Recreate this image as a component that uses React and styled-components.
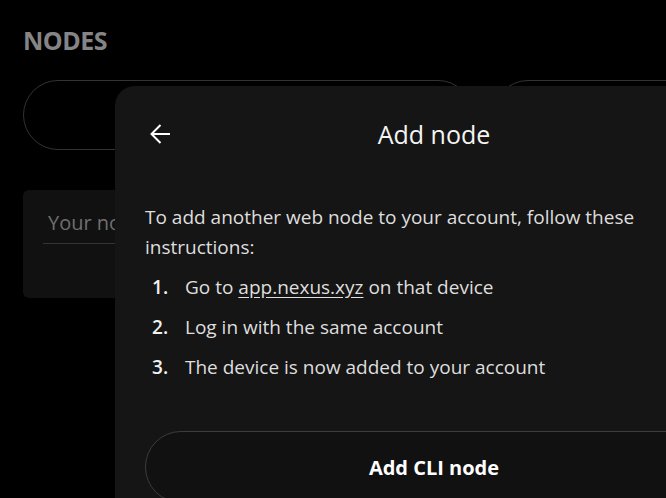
import React from 'react';
import styled, { createGlobalStyle } from 'styled-components';

const GlobalStyle = createGlobalStyle`
  html, body {
    margin: 0;
    padding: 0;
    background: #000;
    overflow: hidden;
  }
  body {
    font-family: 'Open Sans', 'Noto Sans', sans-serif;
    color: #e6e6e6;
  }
`;

const Page = styled.div`
  position: relative;
  width: 666px;
  height: 498px;
  overflow: hidden;
  padding: 26px 23px;
  box-sizing: border-box;
`;

const Heading = styled.h1`
  margin: 0;
  font-size: 25px;
  font-weight: 700;
  letter-spacing: -0.5px;
  color: #858585;
  line-height: 28px;
`;

const ActionRow = styled.div`
  display: flex;
  gap: 20px;
  margin-top: 26px;
`;

const Pill = styled.button`
  flex-shrink: 0;
  width: 450px;
  height: 70px;
  border-radius: 35px;
  border: 1px solid #333;
  background: transparent;
`;

const Card = styled.div`
  margin-top: 40px;
  width: 450px;
  height: 108px;
  box-sizing: border-box;
  padding: 17px 20px;
  background: #111;
  border-radius: 6px;
`;

const NameInput = styled.input`
  width: 100%;
  box-sizing: border-box;
  background: transparent;
  border: none;
  border-bottom: 1px solid #333;
  padding: 2px 5px 7px;
  font-family: inherit;
  font-size: 20px;
  color: #ddd;
  outline: none;

  &::placeholder {
    color: #6f6f6f;
  }
`;

const Modal = styled.div`
  position: absolute;
  left: 115px;
  top: 86px;
  width: 638px;
  height: 460px;
  box-sizing: border-box;
  padding: 28px 30px;
  background: #151515;
  border-radius: 20px;
`;

const Header = styled.div`
  display: grid;
  grid-template-columns: 40px 1fr 40px;
  align-items: center;
  height: 40px;
`;

const BackButton = styled.button`
  display: flex;
  align-items: center;
  background: none;
  border: none;
  padding: 0 0 0 5px;
  color: #fff;
  cursor: pointer;
`;

const Title = styled.h2`
  margin: 0;
  text-align: center;
  font-size: 25px;
  font-weight: 400;
  color: #f4f4f4;
`;

const Intro = styled.p`
  margin: 48px 0 0;
  font-size: 19px;
  line-height: 30px;
  color: #dedede;
`;

const Steps = styled.ol`
  margin: 10px 0 0;
  padding: 0;
  list-style: none;
  display: flex;
  flex-direction: column;
  gap: 10px;
`;

const Step = styled.li`
  display: flex;
  font-size: 19px;
  line-height: 30px;
  color: #dedede;
`;

const StepNum = styled.span`
  width: 40px;
  padding-left: 7px;
  box-sizing: border-box;
  font-weight: 600;
  color: #f0f0f0;
`;

const Link = styled.a`
  color: #dedede;
  text-decoration: underline;
  text-underline-offset: 3px;
`;

const OutlineButton = styled.button`
  display: block;
  width: 100%;
  height: 72px;
  margin-top: 49px;
  border-radius: 36px;
  border: 1px solid #3c3c3c;
  background: #111;
  font-family: inherit;
  font-size: 20px;
  font-weight: 700;
  color: #fff;
`;

const ArrowLeft = () => (
  <svg width="21" height="20" viewBox="0 0 21 20" fill="none" stroke="currentColor" strokeWidth="2">
    <path d="M1.5 10H20" />
    <path d="M10.5 1L1.5 10L10.5 19" />
  </svg>
);

const steps = [
  <>Go to <Link href="#">app.nexus.xyz</Link> on that device</>,
  'Log in with the same account',
  'The device is now added to your account',
];

export default function App() {
  return (
    <>
      <GlobalStyle />
      <Page>
        <Heading>NODES</Heading>
        <ActionRow>
          <Pill />
          <Pill />
        </ActionRow>
        <Card>
          <NameInput placeholder="Your node name" />
        </Card>

        <Modal>
          <Header>
            <BackButton>
              <ArrowLeft />
            </BackButton>
            <Title>Add node</Title>
            <span />
          </Header>
          <Intro>
            To add another web node to your account, follow these instructions:
          </Intro>
          <Steps>
            {steps.map((s, i) => (
              <Step key={i}>
                <StepNum>{i + 1}.</StepNum>
                <span>{s}</span>
              </Step>
            ))}
          </Steps>
          <OutlineButton>Add CLI node</OutlineButton>
        </Modal>
      </Page>
    </>
  );
}
